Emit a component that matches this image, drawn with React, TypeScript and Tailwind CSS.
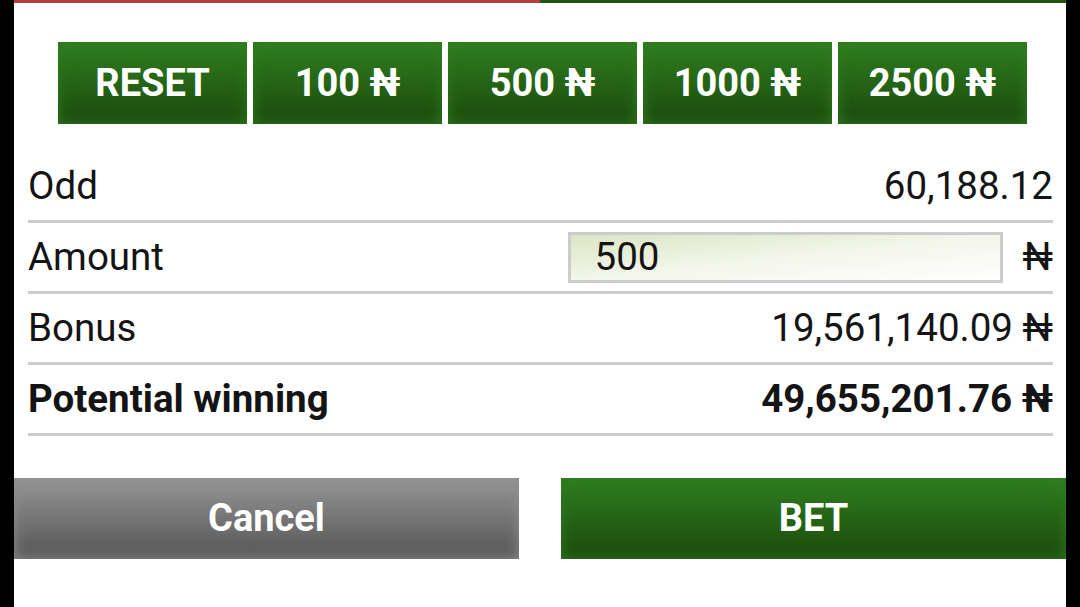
const chips = ['RESET', '100 ₦', '500 ₦', '1000 ₦', '2500 ₦'];

const font = { fontFamily: 'Roboto, "DejaVu Sans", sans-serif' };

function Row({
  label,
  children,
  bold = false,
}: {
  label: string;
  children: React.ReactNode;
  bold?: boolean;
}) {
  return (
    <div
      className={`flex h-[71px] items-center justify-between border-b-[3px] border-[#cccccc] text-[38.5px] text-[#141414] ${
        bold ? 'font-bold' : ''
      }`}
    >
      <span>{label}</span>
      {children}
    </div>
  );
}

export default function App() {
  return (
    <div className="flex h-[607px] w-[1080px] bg-black px-[14px]" style={font}>
      <div className="flex flex-1 flex-col bg-white">
        <div className="flex h-[3px]">
          <div className="flex-1 bg-[#b63c3e]" />
          <div className="flex-1 bg-[#1f5412]" />
        </div>

        <div className="mt-[39px] flex gap-[6px] pl-[44px]">
          {chips.map((c) => (
            <button
              key={c}
              className="flex h-[82px] w-[189px] items-center justify-center bg-linear-to-b from-[#2f7f1f] to-[#1b4a0d] text-[38px] font-bold text-white shadow-[inset_0_0_14px_#2e7a1e]"
            >
              {c}
            </button>
          ))}
        </div>

        <div className="mt-[28px] flex flex-col pl-[14px] pr-[13px]">
          <Row label="Odd">
            <span>60,188.12</span>
          </Row>
          <Row label="Amount">
            <div className="flex items-center gap-[20px]">
              <div className="flex h-[51px] w-[435px] items-center border-[3px] border-[#cccccc] bg-linear-to-br from-[#dbe5c4] via-[#f3f6ea] to-white pl-[24px]">
                500
              </div>
              <span>₦</span>
            </div>
          </Row>
          <Row label="Bonus">
            <span>19,561,140.09 ₦</span>
          </Row>
          <Row label="Potential winning" bold>
            <span>49,655,201.76 ₦</span>
          </Row>
        </div>

        <div className="mt-[42px] flex justify-between">
          <button className="flex h-[81px] w-[505px] items-center justify-center bg-linear-to-b from-[#969696] to-[#555555] text-[38px] font-bold text-white shadow-[inset_0_0_14px_#8e8e8e]">
            Cancel
          </button>
          <button className="flex h-[81px] w-[505px] items-center justify-center bg-linear-to-b from-[#2f7f1f] to-[#1b4a0d] text-[38px] font-bold text-white shadow-[inset_0_0_14px_#2e7a1e]">
            BET
          </button>
        </div>
      </div>
    </div>
  );
}
